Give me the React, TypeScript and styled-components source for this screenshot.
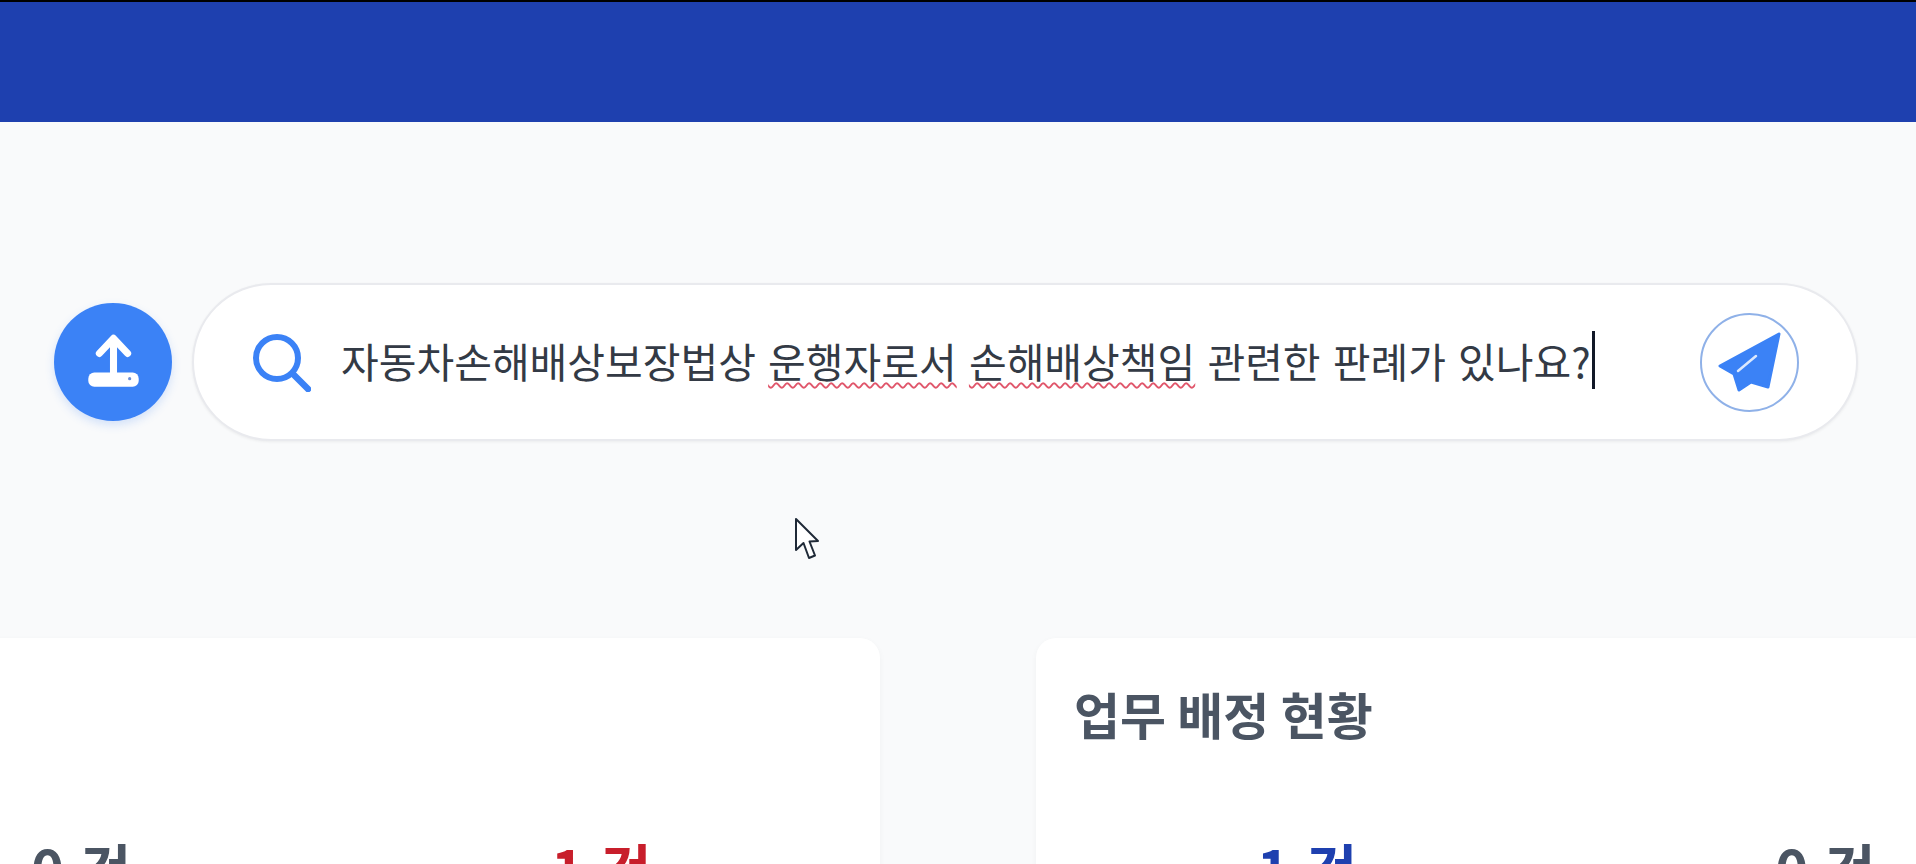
import styled, { createGlobalStyle } from "styled-components";

const GlobalStyle = createGlobalStyle`
  html, body {
    margin: 0;
    padding: 0;
    height: 864px;
    overflow: hidden;
    background-color: #f9fafb;
    font-family: "Noto Sans CJK KR", "Noto Sans", sans-serif;
  }
`;

const Wrapper = styled.div`
  position: relative;
  width: 1916px;
  height: 864px;
  overflow: hidden;
  display: flex;
  flex-direction: column;
  background-color: #f9fafb;
`;
const Header = styled.header`
  height: 120px;
  flex-shrink: 0;
  background-color: #1e40af;
  border-top: 2px solid #000;
`;
const SearchRow = styled.div`
  display: flex;
  align-items: center;
  gap: 20px;
  padding: 161px 58px 0 54px;
`;
const UploadButton = styled.button`
  width: 118px;
  height: 118px;
  flex-shrink: 0;
  padding: 0;
  border: none;
  border-radius: 50%;
  background-color: #3b82f6;
  box-shadow: 0 4px 10px rgba(59, 130, 246, 0.2);
  display: flex;
  justify-content: center;
  align-items: center;

  svg {
    width: 118px;
    height: 118px;
  }
`;
const SearchBox = styled.div`
  flex: 1;
  height: 154px;
  display: flex;
  align-items: center;
  gap: 30px;
  padding: 0 57px 0 58px;
  background-color: #fff;
  border: 2px solid #e9eaee;
  border-radius: 80px;
  box-shadow: 0 1px 3px rgba(0, 0, 0, 0.06);
`;
const SearchIcon = styled.svg`
  width: 59px;
  height: 59px;
  flex-shrink: 0;
`;
const QueryText = styled.div`
  flex: 1;
  padding-bottom: 4px;
  font-size: 41px;
  line-height: 58px;
  word-spacing: 3px;
  color: #333a45;
  white-space: pre;
`;
const Misspelled = styled.span`
  text-decoration: underline wavy #e0566b 2px;
  text-underline-offset: 4px;
`;
const Caret = styled.span`
  display: inline-block;
  width: 3px;
  height: 58px;
  margin-left: 1px;
  vertical-align: top;
  background-color: #111827;
`;
const SendButton = styled.button`
  width: 99px;
  height: 99px;
  flex-shrink: 0;
  padding: 0;
  border: 2px solid #8fb1e8;
  border-radius: 50%;
  background-color: #fff;
  display: flex;
  justify-content: center;
  align-items: center;

  svg {
    width: 95px;
    height: 95px;
  }
`;
const Cards = styled.div`
  display: grid;
  grid-template-columns: 920px 920px;
  gap: 156px;
  margin: 197px 0 0 -40px;
`;
const Card = styled.section`
  height: 320px;
  padding: 41px 0 0;
  box-sizing: border-box;
  background-color: #fff;
  border-radius: 20px;
  box-shadow: 0 2px 6px rgba(0, 0, 0, 0.04);
`;
const CardTitle = styled.h2`
  height: 68px;
  margin: 0;
  padding-left: 38px;
  font-size: 50px;
  line-height: 68px;
  font-weight: 700;
  color: #4b5563;
`;
const StatRow = styled.div<{ $inset: number; $gap: number }>`
  display: flex;
  gap: ${(p) => p.$gap}px;
  margin-top: 86px;
  padding-left: ${(p) => p.$inset}px;
`;
const Stat = styled.span<{ $color: string }>`
  font-size: 56px;
  line-height: 68px;
  font-weight: 700;
  word-spacing: 3px;
  color: ${(p) => p.$color};
`;
const Pointer = styled.svg`
  position: absolute;
  left: 794px;
  top: 517px;
  width: 26px;
  height: 44px;
`;

export default function App() {
  return (
    <Wrapper>
      <GlobalStyle />
      <Header />
      <SearchRow>
        <UploadButton aria-label="upload">
          <svg viewBox="0 0 117 117">
            <rect x="34" y="69" width="50" height="14" rx="6" fill="#fff" />
            <path d="M59 70V37M45 50L59 35L73 50" fill="none" stroke="#fff" strokeWidth="7" strokeLinecap="round" strokeLinejoin="round" />
            <circle cx="75" cy="75" r="1.6" fill="#6b8fd6" />
          </svg>
        </UploadButton>
        <SearchBox>
          <SearchIcon viewBox="0 0 59 59">
            <circle cx="25" cy="25" r="21" fill="none" stroke="#3b82f6" strokeWidth="6" />
            <path d="M41 41L56 56" stroke="#3b82f6" strokeWidth="6.5" strokeLinecap="round" />
          </SearchIcon>
          <QueryText>
            자동차손해배상보장법상 <Misspelled>운행자로서</Misspelled> <Misspelled>손해배상책임</Misspelled> 관련한 판례가 있나요?
            <Caret />
          </QueryText>
          <SendButton aria-label="send">
            <svg viewBox="2 2 95 95">
              <path d="M79 21L20 53L34 61L39 77L51 69L68 74Z" fill="#3b82f6" stroke="#3b82f6" strokeWidth="3" strokeLinejoin="round" />
              <path d="M56 43L38 58" stroke="#dbe8fd" strokeWidth="2.5" strokeLinecap="round" />
            </svg>
          </SendButton>
        </SearchBox>
      </SearchRow>
      <Cards>
        <Card>
          <CardTitle />
          <StatRow $inset={71} $gap={420}>
            <Stat $color="#4b5563">0 건</Stat>
            <Stat $color="#c81e2b">1 건</Stat>
          </StatRow>
        </Card>
        <Card>
          <CardTitle>업무 배정 현황</CardTitle>
          <StatRow $inset={221} $gap={418}>
            <Stat $color="#1e40af">1 건</Stat>
            <Stat $color="#4b5563">0 건</Stat>
          </StatRow>
        </Card>
      </Cards>
      <Pointer viewBox="0 0 26 44">
        <path d="M2 2V33L9.500 26L15 41L21 38.500L15.500 24.500L24 24Z" fill="#fff" stroke="#1f2937" strokeWidth="2" strokeLinejoin="round" />
      </Pointer>
    </Wrapper>
  );
}
